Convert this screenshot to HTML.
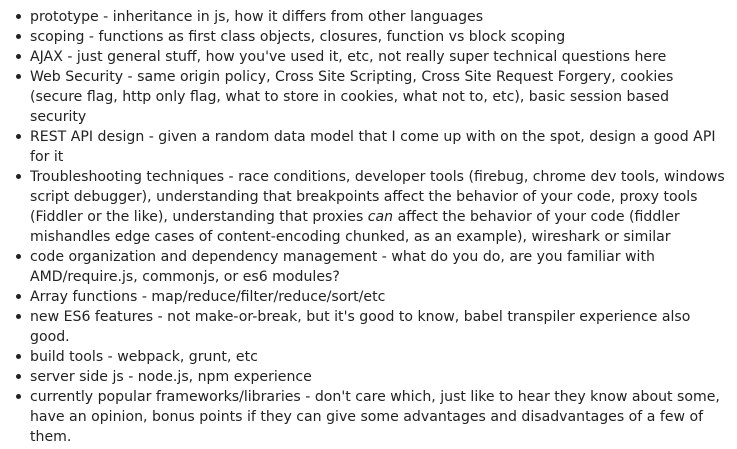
<!DOCTYPE html>
<html><head><style>
body{margin:0;background:#fff;width:737px;height:449px;overflow:hidden}
ul{margin:0;padding:7px 0 0 30px;list-style:none;font-family:"DejaVu Sans","Liberation Sans",sans-serif;font-size:14.1px;line-height:20px;color:#222;white-space:nowrap}
li{position:relative}
li:before{content:"";position:absolute;left:-14px;top:7px;width:5px;height:5px;border-radius:50%;background:#222}
</style></head><body><ul>
<li>prototype - inheritance in js, how it differs from other languages</li>
<li>scoping - functions as first class objects, closures, function vs block scoping</li>
<li>AJAX - just general stuff, how you've used it, etc, not really super technical questions here</li>
<li>Web Security - same origin policy, Cross Site Scripting, Cross Site Request Forgery, cookies<br>(secure flag, http only flag, what to store in cookies, what not to, etc), basic session based<br>security</li>
<li>REST API design - given a random data model that I come up with on the spot, design a good API<br>for it</li>
<li>Troubleshooting techniques - race conditions, developer tools (firebug, chrome dev tools, windows<br>script debugger), understanding that breakpoints affect the behavior of your code, proxy tools<br>(Fiddler or the like), understanding that proxies <i>can</i> affect the behavior of your code (fiddler<br>mishandles edge cases of content-encoding chunked, as an example), wireshark or similar</li>
<li>code organization and dependency management - what do you do, are you familiar with<br>AMD/require.js, commonjs, or es6 modules?</li>
<li>Array functions - map/reduce/filter/reduce/sort/etc</li>
<li>new ES6 features - not make-or-break, but it's good to know, babel transpiler experience also<br>good.</li>
<li>build tools - webpack, grunt, etc</li>
<li>server side js - node.js, npm experience</li>
<li>currently popular frameworks/libraries - don't care which, just like to hear they know about some,<br>have an opinion, bonus points if they can give some advantages and disadvantages of a few of<br>them.</li>
</ul></body></html>
